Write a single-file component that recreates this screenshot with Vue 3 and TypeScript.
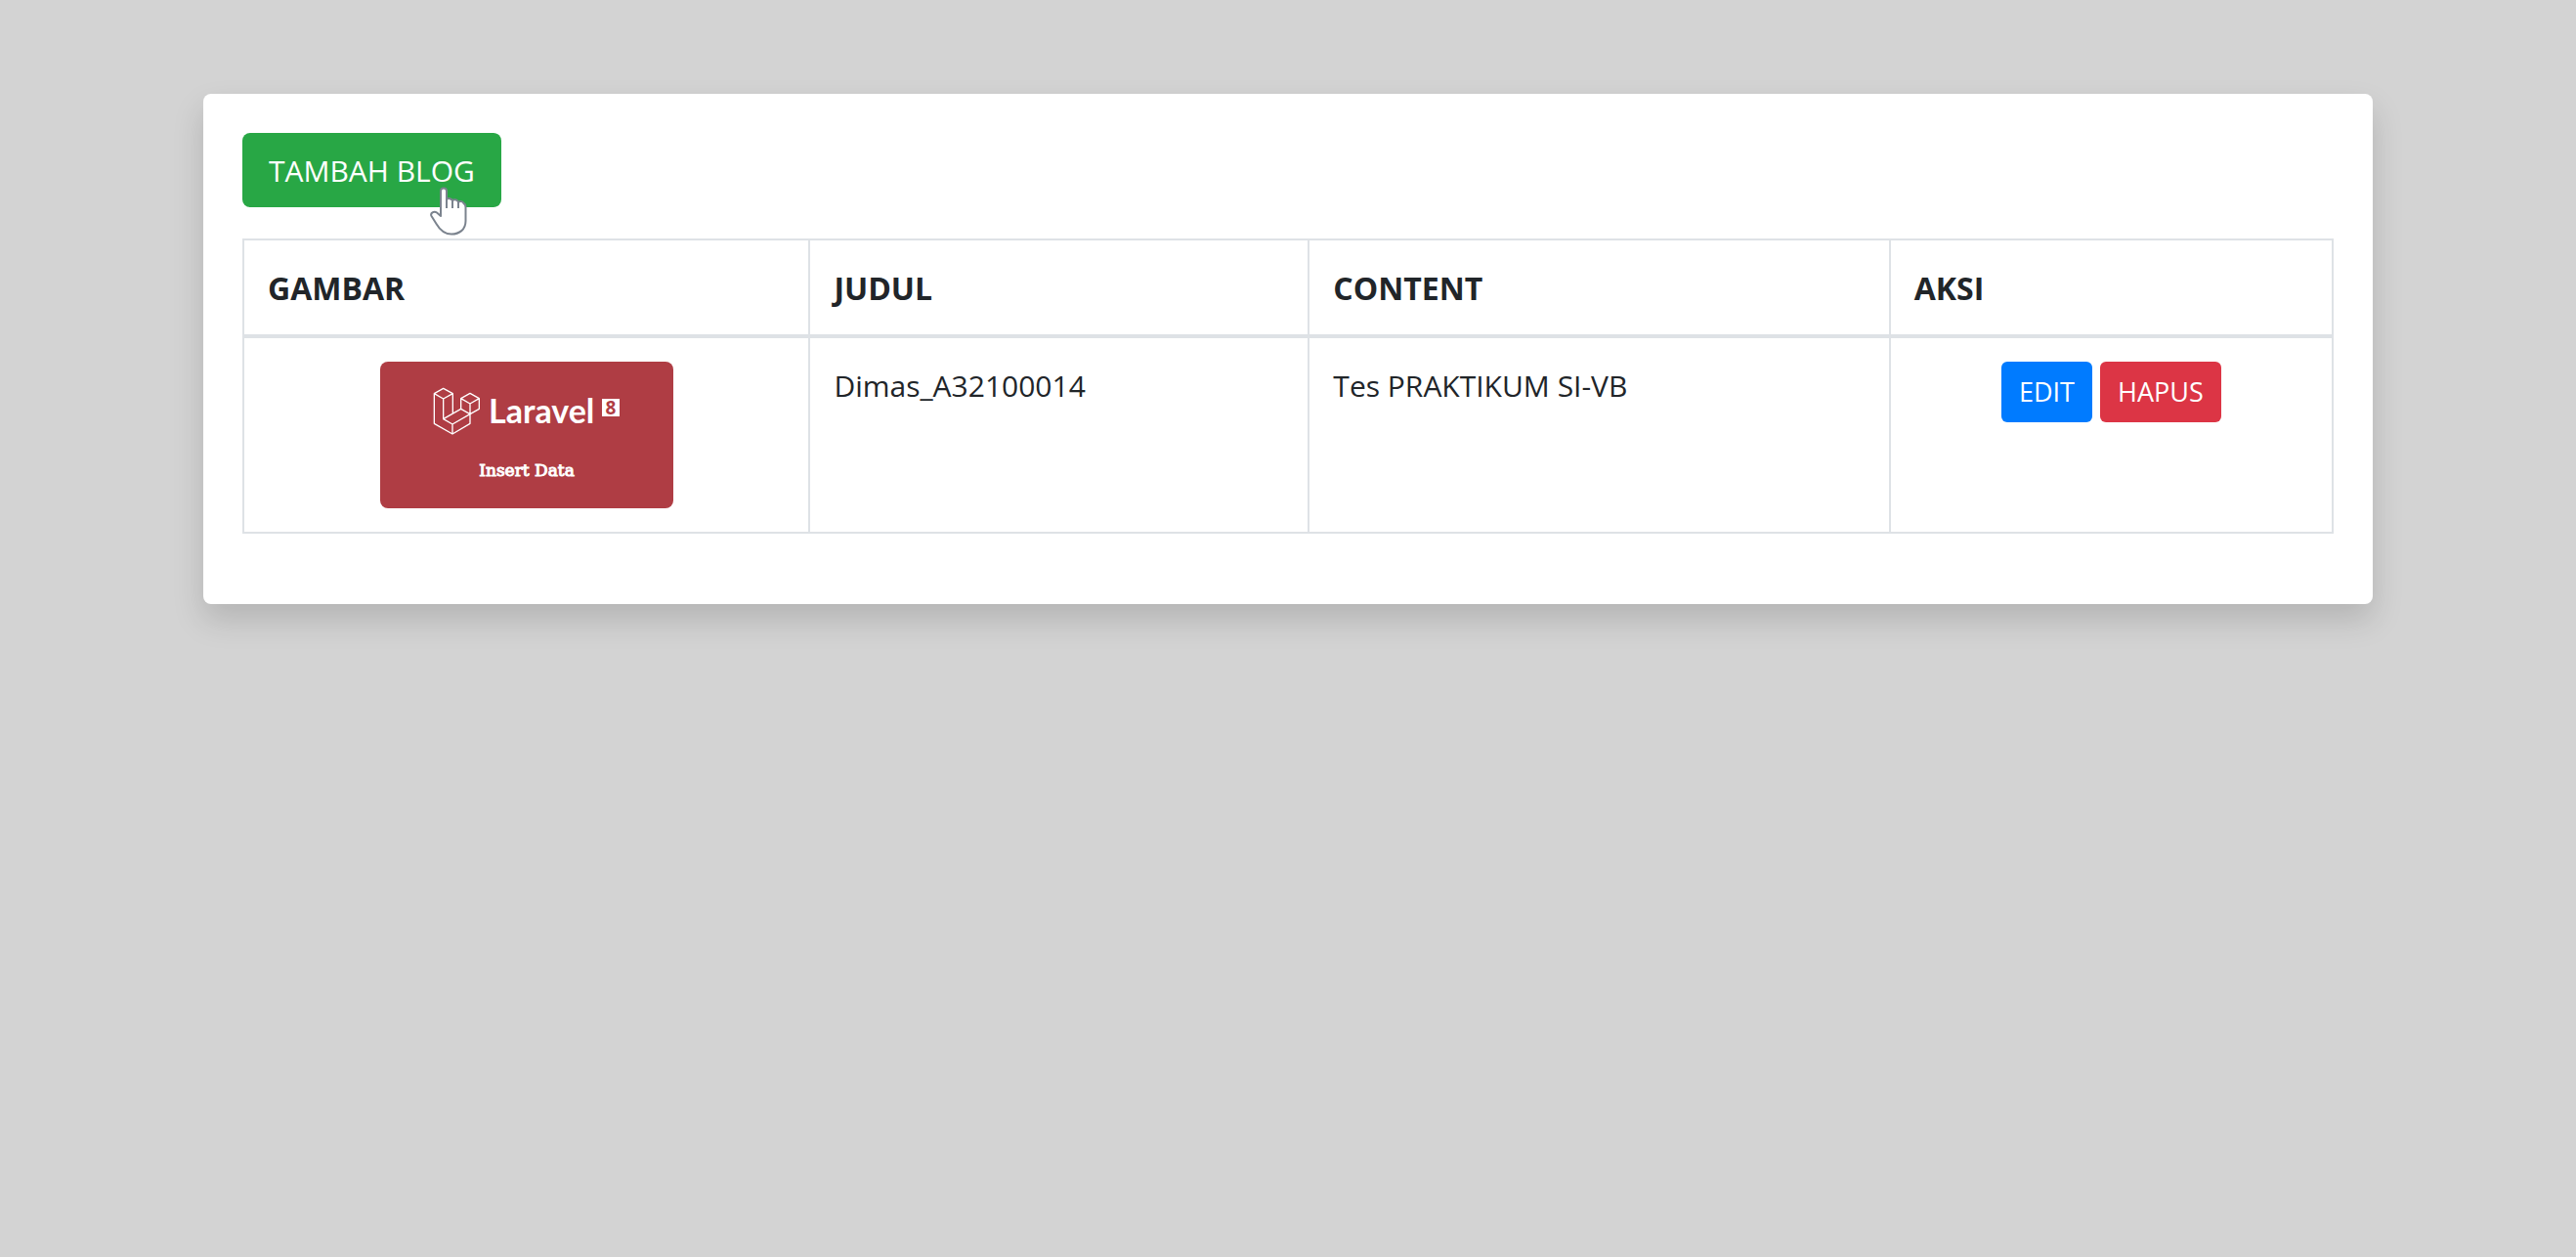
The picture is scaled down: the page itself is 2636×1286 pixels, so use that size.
<script setup lang="ts">
interface Blog {
  id: number
  title: string
  content: string
}

const blogs: Blog[] = [
  { id: 1, title: 'Dimas_A32100014', content: 'Tes PRAKTIKUM SI-VB' },
]
</script>

<template>
  <main class="container">
    <section class="card">
      <div class="toolbar">
        <a class="btn btn-success" href="#create">TAMBAH BLOG</a>
        <svg class="pointer" viewBox="0 0 38 50" aria-hidden="true">
          <path
            d="M11 30V4.500Q11 1.500 14 1.500T17 4.500V13Q19 11.500 21 12.500T23 14Q27 12 29 15.500Q33 14 34.500 17Q36.500 18 36.500 21V35C36.500 44 30 48.500 22 48.500C14 48.500 10 44 6.500 38L1.500 30C0 27 4 24.500 7 26.500Z"
            fill="#fff" stroke="#7b838e" stroke-width="2" stroke-linejoin="round"
          />
          <path d="M17 12V22M23 14V22M29 15.500V22" fill="none" stroke="#7b838e" stroke-width="2" />
        </svg>
      </div>

      <table class="table">
        <colgroup>
          <col class="col-image">
          <col class="col-title">
          <col class="col-content">
          <col class="col-action">
        </colgroup>
        <thead>
          <tr>
            <th scope="col">GAMBAR</th>
            <th scope="col">JUDUL</th>
            <th scope="col">CONTENT</th>
            <th scope="col">AKSI</th>
          </tr>
        </thead>
        <tbody>
          <tr v-for="blog in blogs" :key="blog.id">
            <td>
              <svg class="thumb" viewBox="0 0 300 150" role="img" aria-label="Laravel 8 Insert Data">
                <rect width="300" height="150" fill="#af3d44" />
                <g
                  transform="translate(42 10) scale(.3333)" fill="none" stroke="#fff"
                  stroke-width="4" stroke-linejoin="round"
                >
                  <path d="M40 68L68 52L97 68L68 84ZM40 68V160L96 192L150 160V131M68 84V146L122 115M97 68V130M68 146L96 162V192M96 162L150 131" />
                  <path d="M122 83L150 67L178 83L150 99ZM122 83V115L150 131L178 115V83M150 99V131" />
                </g>
                <text class="brand" x="111" y="63">Laravel</text>
                <rect x="227" y="38" width="18" height="18" fill="#fff" />
                <text class="version" x="236" y="54" text-anchor="middle">8</text>
                <text class="caption" x="150" y="117" text-anchor="middle">Insert Data</text>
              </svg>
            </td>
            <td class="text">{{ blog.title }}</td>
            <td class="text">{{ blog.content }}</td>
            <td>
              <form class="actions" @submit.prevent>
                <a class="btn btn-sm btn-primary" href="#edit">EDIT</a>
                <button class="btn btn-sm btn-danger" type="submit">HAPUS</button>
              </form>
            </td>
          </tr>
        </tbody>
      </table>
    </section>
  </main>
</template>

<style>
body {
  background: #d3d3d3;
}
</style>

<style scoped>
* {
  box-sizing: border-box;
}

.container {
  max-width: 2280px;
  margin: 0 auto;
  padding: 96px 30px;
  color: #212529;
  font-family: "Segoe UI", "Open Sans", "Noto Sans", sans-serif;
  font-size: 30px;
  line-height: 48px;
}

.card {
  padding: 40px;
  border-radius: 8px;
  background: #fff;
  box-shadow: 0 16px 32px rgba(0, 0, 0, 0.15);
}

.toolbar {
  position: relative;
  display: flex;
  margin-bottom: 32px;
}

.btn {
  display: block;
  padding: 13px 25px 11px;
  border: 2px solid transparent;
  border-radius: 8px;
  color: #fff;
  font: inherit;
  text-decoration: none;
  cursor: pointer;
}

.btn-success {
  background: #28a745;
}

.btn-sm {
  padding: 8px 16px;
  border-radius: 6px;
  font-size: 27px;
  line-height: 42px;
}

.btn-primary {
  background: #007bff;
}

.btn-danger {
  background: #dc3545;
}

.pointer {
  position: absolute;
  top: 55px;
  left: 192px;
  width: 38px;
  height: 50px;
  pointer-events: none;
}

.table {
  width: 100%;
  margin-bottom: 32px;
  border-collapse: collapse;
  table-layout: fixed;
}

.col-image {
  width: 27.1%;
}

.col-title {
  width: 23.9%;
}

.col-content {
  width: 27.8%;
}

.col-action {
  width: 21.2%;
}

th,
td {
  padding: 24px;
  border: 2px solid #dee2e6;
  text-align: left;
  vertical-align: top;
}

th,
.text {
  padding-top: 25px;
  padding-bottom: 23px;
}

th {
  border-bottom-width: 4px;
  font-size: 32px;
  font-weight: 700;
}

.thumb {
  display: block;
  width: 300px;
  height: 150px;
  margin: 0 auto;
  border-radius: 8px;
}

.thumb text {
  fill: #fff;
}

.thumb .brand {
  font: 700 34px Lato, sans-serif;
}

.thumb .version {
  fill: #af3d44;
  font: 700 19px "Open Sans", sans-serif;
}

.thumb .caption {
  stroke: #fff;
  stroke-width: 1px;
  font: 400 17px "DejaVu Serif", serif;
}

.actions {
  display: flex;
  justify-content: center;
  gap: 8px;
  margin: 0;
}
</style>
